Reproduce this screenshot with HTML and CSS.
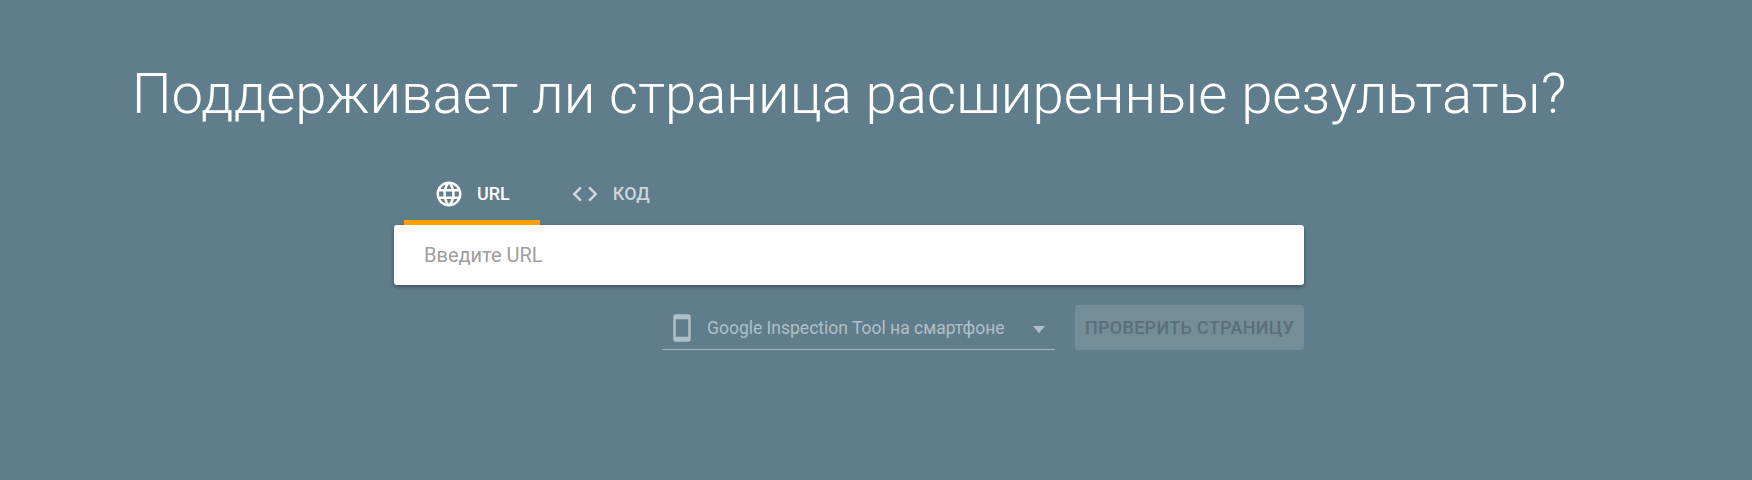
FILE: index.html
```html
<!DOCTYPE html>
<html lang="ru">

<head>
    <meta charset="UTF-8">
    <title>Проверка расширенных результатов</title>
    <link rel="stylesheet" href="styles.css">
</head>

<body>
    <div class="page">
        <h1 class="title">Поддерживает ли страница расширенные результаты?</h1>
        <div class="panel">
            <ul class="tabs">
                <li class="tab selected">
                    <svg class="icon" viewBox="0 0 24 24"><path d="M11.99 2C6.47 2 2 6.48 2 12s4.47 10 9.99 10C17.52 22 22 17.52 22 12S17.52 2 11.99 2zm6.93 6h-2.95c-.32-1.25-.78-2.45-1.38-3.56 1.84.63 3.37 1.91 4.33 3.56zM12 4.04c.83 1.2 1.48 2.53 1.91 3.96h-3.82c.43-1.43 1.08-2.76 1.91-3.96zM4.26 14C4.1 13.36 4 12.69 4 12s.1-1.36.26-2h3.38c-.08.66-.14 1.32-.14 2 0 .68.06 1.34.14 2H4.26zm.82 2h2.95c.32 1.25.78 2.45 1.38 3.56-1.84-.63-3.37-1.9-4.33-3.56zm2.95-8H5.08c.96-1.66 2.49-2.93 4.33-3.56C8.81 5.55 8.35 6.75 8.03 8zM12 19.96c-.83-1.2-1.48-2.53-1.91-3.96h3.82c-.43 1.43-1.08 2.76-1.91 3.96zM14.34 14H9.66c-.09-.66-.16-1.32-.16-2 0-.68.07-1.35.16-2h4.68c.09.65.16 1.32.16 2 0 .68-.07 1.34-.16 2zm.25 5.56c.6-1.11 1.06-2.31 1.38-3.56h2.95c-.96 1.65-2.49 2.93-4.33 3.56zM16.36 14c.08-.66.14-1.32.14-2 0-.68-.06-1.34-.14-2h3.38c.16.64.26 1.31.26 2s-.1 1.36-.26 2h-3.38z"/></svg>
                    <span>URL</span>
                </li>
                <li class="tab">
                    <svg class="icon" viewBox="0 0 24 24"><path d="M9.4 16.6L4.8 12l4.6-4.6L8 6l-6 6 6 6 1.4-1.4zm5.2 0l4.6-4.6-4.6-4.6L16 6l6 6-6 6-1.4-1.4z"/></svg>
                    <span>Код</span>
                </li>
            </ul>
            <div class="url-box">Введите URL</div>
            <div class="actions">
                <div class="agent">
                    <svg class="icon" viewBox="0 0 24 24"><path d="M17 1.01L7 1c-1.1 0-2 .9-2 2v18c0 1.1.9 2 2 2h10c1.1 0 2-.9 2-2V3c0-1.1-.9-1.99-2-1.99zM17 19H7V5h10v14z"/></svg>
                    <span class="agent-name">Google Inspection Tool на смартфоне</span>
                    <i class="arrow"></i>
                </div>
                <div class="check-btn">Проверить страницу</div>
            </div>
        </div>
    </div>
</body>

</html>
```

FILE: styles.css
```css
* {
    margin: 0;
    padding: 0;
    list-style-type: none;
    box-sizing: border-box;
}
html, body {
    width: 100%;
    height: 100%;
}
body {
    background-color: #607d8b;
    font-family: Roboto, "Noto Sans", sans-serif;
    overflow: hidden;
}
.page {
    display: flex;
    flex-direction: column;
    align-items: center;
    width: 1698px;
    padding-top: 58px;
}
.title {
    font-size: 56.3px;
    font-weight: 300;
    line-height: 72px;
    color: #fff;
    white-space: nowrap;
}
.panel {
    width: 910px;
    margin-top: 37px;
}
.tabs {
    display: flex;
    padding-left: 10px;
}
.tab {
    display: flex;
    align-items: center;
    gap: 13px;
    height: 58px;
    padding: 0 30px;
    font-size: 18px;
    font-weight: 500;
    text-transform: uppercase;
    color: rgba(255, 255, 255, .7);
    fill: rgba(255, 255, 255, .7);
    border-bottom: 5px solid transparent;
}
.tab.selected {
    color: #fff;
    fill: #fff;
    border-bottom-color: #ff9f00;
}
.icon {
    width: 30px;
    height: 30px;
    flex: none;
}
.url-box {
    height: 60px;
    line-height: 60px;
    padding-left: 30px;
    font-size: 20px;
    color: #9e9e9e;
    background-color: #fff;
    border-radius: 3px;
    box-shadow: 0 2px 4px rgba(0, 0, 0, .35);
}
.actions {
    display: flex;
    justify-content: flex-end;
    gap: 20px;
    margin-top: 20px;
}
.agent {
    display: flex;
    align-items: center;
    gap: 10px;
    width: 393px;
    height: 45px;
    padding: 2px 0 0 5px;
    fill: #afc0c8;
    color: #afc0c8;
    font-size: 17.5px;
    border-bottom: 1px solid #a3b5bd;
}
.agent-name {
    white-space: nowrap;
}
.arrow {
    width: 0;
    height: 0;
    margin: 3px 10px 0 auto;
    border-left: 6.5px solid transparent;
    border-right: 6.5px solid transparent;
    border-top: 7px solid #afc0c8;
}
.check-btn {
    width: 229px;
    height: 45px;
    line-height: 45px;
    text-align: center;
    font-size: 18px;
    font-weight: 500;
    letter-spacing: .3px;
    text-transform: uppercase;
    white-space: nowrap;
    color: #5a6f79;
    background-color: #738d99;
    border-radius: 3px;
}
```
